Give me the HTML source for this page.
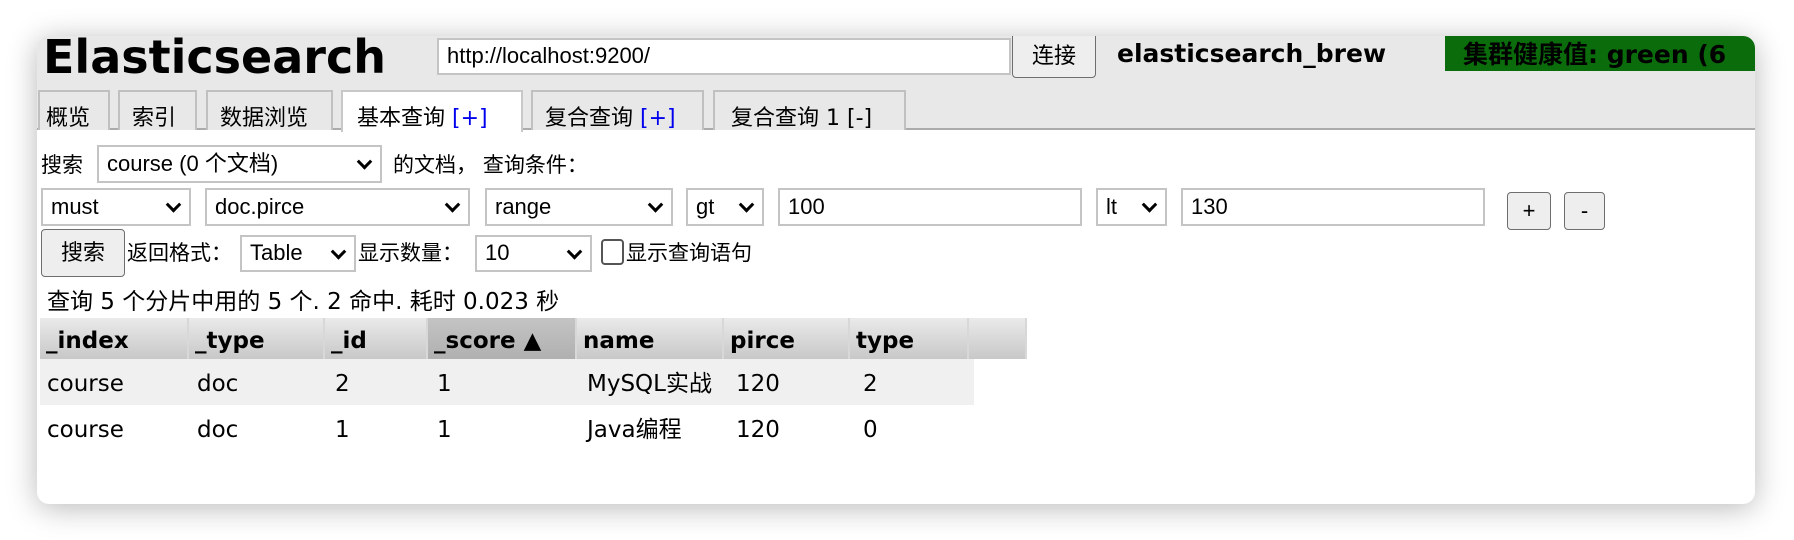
<!DOCTYPE html>
<html><head><meta charset="utf-8"><style>
*{box-sizing:border-box;margin:0;padding:0}
body{width:1794px;height:540px;background:#fff;position:relative;overflow:hidden;font-family:"Liberation Sans","Noto Sans CJK SC",sans-serif;font-size:20px;color:#000;line-height:1.2}
.win{position:absolute;left:37px;top:36px;width:1718px;height:468px;background:#fff;border-radius:12px;box-shadow:0 4px 30px rgba(0,0,0,.28);overflow:hidden}
.hdr{position:absolute;left:0;top:0;width:100%;height:94px;background:#e8e8e8;border-bottom:2px solid #ababab}
.a{position:absolute;white-space:nowrap}
.box{position:absolute;border:2px solid #c4c4c4;background:#fff;font-size:22px;padding-left:8px;display:flex;align-items:center}
.sel::after{content:"";position:absolute;right:10px;top:50%;width:8px;height:8px;border-right:3px solid #000;border-bottom:3px solid #000;transform:translateY(-70%) rotate(45deg)}
.btn{position:absolute;border:1.5px solid #6e6e6e;border-radius:4px;background:#eee;display:flex;align-items:center;justify-content:center;font-size:22px}
.tab{position:absolute;top:54px;height:40px;border:2px solid #c0c0c0;border-bottom:none;background:#e8e8e8;font-family:"DejaVu Sans","Noto Sans CJK SC",sans-serif;font-size:22px;padding:14px 0 0 6px;white-space:nowrap}
.tab.on{background:#fff;height:42px;border-color:#c8c8c8}
.b{color:#0000ee}
.v{font-family:"DejaVu Sans","Noto Sans CJK SC",sans-serif}
.th{position:absolute;top:282px;height:41px;background:linear-gradient(#eaeaea,#c8c8c8);border-right:2px solid #d8d8d8;font-family:"DejaVu Sans",sans-serif;font-weight:bold;font-size:23px;padding:10px 0 0 6px;white-space:nowrap}
.td{position:absolute;font-family:"DejaVu Sans","Noto Sans CJK SC",sans-serif;font-size:23px;line-height:28px;white-space:nowrap}
</style></head><body>
<div class="win">
<div class="hdr"></div>
<div class="a v" style="left:6px;top:-6px;font-size:46px;font-weight:bold">Elasticsearch</div>
<div class="box" style="left:400px;top:2px;width:574px;height:37px;font-size:22px">http://localhost:9200/</div>
<div class="btn" style="left:975px;top:-2px;width:84px;height:44px;border-radius:0 0 4px 4px">连接</div>
<div class="a v" style="left:1080px;top:3px;font-size:25px;font-weight:bold">elasticsearch_brew</div>
<div class="a v" style="left:1408px;top:0;width:320px;height:35px;background:#0b6c0b;font-size:25px;font-weight:bold;padding-left:18px;line-height:37px">集群健康值: green (6</div>
<div class="tab" style="left:1px;width:72px">概览</div>
<div class="tab" style="left:81px;width:79px;padding-left:12px">索引</div>
<div class="tab" style="left:169px;width:127px;padding-left:12px">数据浏览</div>
<div class="tab on" style="left:304px;width:182px;padding-left:14px">基本查询 <span class="b">[+]</span></div>
<div class="tab" style="left:494px;width:173px;padding-left:12px">复合查询 <span class="b">[+]</span></div>
<div class="tab" style="left:676px;width:193px;padding-left:16px">复合查询 1 [-]</div>

<div class="a" style="left:4px;top:117px;font-size:21px">搜索</div>
<div class="box sel" style="left:60px;top:109px;width:285px;height:38px">course (0 个文档)</div>
<div class="a" style="left:356px;top:117px;font-size:21px">的文档，&nbsp;查询条件：</div>

<div class="box sel" style="left:4px;top:152px;width:150px;height:38px">must</div>
<div class="box sel" style="left:168px;top:152px;width:265px;height:38px">doc.pirce</div>
<div class="box sel" style="left:448px;top:152px;width:188px;height:38px">range</div>
<div class="box sel" style="left:649px;top:152px;width:78px;height:38px">gt</div>
<div class="box" style="left:741px;top:152px;width:304px;height:38px">100</div>
<div class="box sel" style="left:1059px;top:152px;width:71px;height:38px">lt</div>
<div class="box" style="left:1144px;top:152px;width:304px;height:38px">130</div>
<div class="btn" style="left:1470px;top:156px;width:44px;height:38px">+</div>
<div class="btn" style="left:1527px;top:156px;width:41px;height:38px">-</div>

<div class="btn" style="left:4px;top:193px;width:84px;height:48px">搜索</div>
<div class="a" style="left:90px;top:205px;font-size:21px">返回格式：</div>
<div class="box sel" style="left:203px;top:199px;width:116px;height:37px">Table</div>
<div class="a" style="left:321px;top:205px;font-size:21px">显示数量：</div>
<div class="box sel" style="left:438px;top:199px;width:117px;height:37px">10</div>
<div class="a" style="left:564px;top:203px;width:23px;height:26px;border:2px solid #555;border-radius:4px"></div>
<div class="a" style="left:589px;top:205px;font-size:21px">显示查询语句</div>

<div class="a v" style="left:10px;top:253px;font-size:23px">查询 5 个分片中用的 5 个. 2 命中. 耗时 0.023 秒</div>

<div class="th" style="left:3px;width:149px">_index</div>
<div class="th" style="left:152px;width:136px">_type</div>
<div class="th" style="left:288px;width:103px">_id</div>
<div class="th" style="left:391px;width:149px;background:linear-gradient(#c4c4c4,#b0b0b0)">_score ▲</div>
<div class="th" style="left:540px;width:147px">name</div>
<div class="th" style="left:687px;width:126px">pirce</div>
<div class="th" style="left:813px;width:119px">type</div>
<div class="th" style="left:932px;width:58px"></div>
<div class="a" style="left:3px;top:323px;width:934px;height:46px;background:#f0f0f0"></div>
<div class="td" style="left:10px;top:334px">course</div><div class="td" style="left:160px;top:334px">doc</div><div class="td" style="left:298px;top:334px">2</div><div class="td" style="left:400px;top:334px">1</div><div class="td" style="left:550px;top:334px">MySQL实战</div><div class="td" style="left:699px;top:334px">120</div><div class="td" style="left:826px;top:334px">2</div>
<div class="td" style="left:10px;top:380px">course</div><div class="td" style="left:160px;top:380px">doc</div><div class="td" style="left:298px;top:380px">1</div><div class="td" style="left:400px;top:380px">1</div><div class="td" style="left:550px;top:380px">Java编程</div><div class="td" style="left:699px;top:380px">120</div><div class="td" style="left:826px;top:380px">0</div>
</div>
</body></html>
